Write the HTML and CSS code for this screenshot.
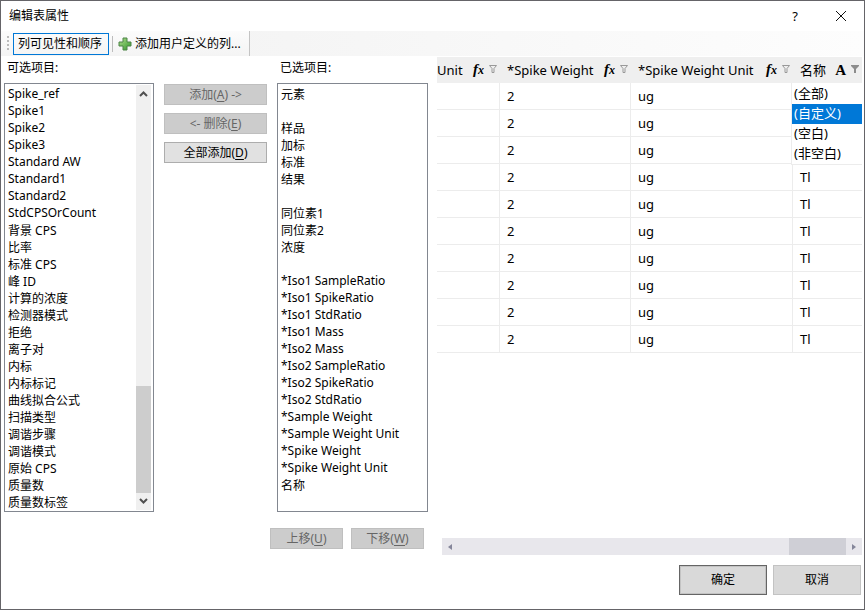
FILE: index.html
```html
<!DOCTYPE html>
<html lang="zh-CN">
<head>
<meta charset="utf-8">
<title>编辑表属性</title>
<link rel="stylesheet" href="styles.css">
</head>
<body>
<svg class="defs" aria-hidden="true">
  <symbol id="funnel" viewBox="0 0 8 8"><path d="M.5 .5h7L5 3.500v4H3v-4z" fill="none" stroke="#999"/></symbol>
  <symbol id="funnel-on" viewBox="0 0 8 8"><path d="M0 0h8v1L5 4V8H3V4L0 1z" fill="#8c8c8c"/></symbol>
</svg>
<div class="dialog">
  <header class="titlebar">
    <h1>编辑表属性</h1>
    <button class="caption help" aria-label="帮助">?</button>
    <button class="caption" aria-label="关闭"><svg width="12" height="12" viewBox="0 0 12 12"><path d="M1 1l10 10M11 1L1 11" stroke="#111" fill="none"/></svg></button>
  </header>
  <nav class="toolbar">
    <div class="strip">
      <span class="grip"></span>
      <button class="tool active">列可见性和顺序</button>
      <span class="separator"></span>
      <button class="tool"><svg width="14" height="14" viewBox="0 0 14 14"><defs><linearGradient id="g" x1="0" y1="0" x2="1" y2="1"><stop offset="0" stop-color="#b4e090"/><stop offset="1" stop-color="#2e9428"/></linearGradient></defs><path d="M5 1h4v4h4v4H9v4H5V9H1V5h4z" fill="url(#g)" stroke="#4d8446"/></svg>添加用户定义的列...</button>
    </div>
  </nav>
  <main class="content">
    <section class="picker">
      <div class="lists">
        <div class="list-block">
          <label for="available">可选项目:</label>
          <div class="listbox">
            <select id="available" multiple size="24">
              <option>Spike_ref</option><option>Spike1</option><option>Spike2</option><option>Spike3</option>
              <option>Standard AW</option><option>Standard1</option><option>Standard2</option><option>StdCPSOrCount</option>
              <option>背景 CPS</option><option>比率</option><option>标准 CPS</option><option>峰 ID</option>
              <option>计算的浓度</option><option>检测器模式</option><option>拒绝</option><option>离子对</option>
              <option>内标</option><option>内标标记</option><option>曲线拟合公式</option><option>扫描类型</option>
              <option>调谐步骤</option><option>调谐模式</option><option>原始 CPS</option><option>质量数</option><option>质量数标签</option>
            </select>
            <div class="vscroll" aria-hidden="true">
              <svg width="9" height="6" viewBox="0 0 9 6"><path d="M1 5l3.500-3.500L8 5" fill="none" stroke="#505050" stroke-width="2"/></svg>
              <span class="vthumb"></span>
              <svg width="9" height="6" viewBox="0 0 9 6"><path d="M1 1l3.500 3.500L8 1" fill="none" stroke="#505050" stroke-width="2"/></svg>
            </div>
          </div>
        </div>
        <div class="transfer">
          <button class="btn" disabled><span>添加(<u>A</u>) -&gt;</span></button>
          <button class="btn" disabled><span>&lt;- 删除(<u>E</u>)</span></button>
          <button class="btn"><span>全部添加(<u>D</u>)</span></button>
        </div>
        <div class="list-block chosen">
          <label for="selected">已选项目:</label>
          <div class="listbox">
            <select id="selected" multiple size="24">
              <option>元素</option><option></option><option>样品</option><option>加标</option><option>标准</option><option>结果</option><option></option>
              <option>同位素1</option><option>同位素2</option><option>浓度</option><option></option>
              <option>*Iso1 SampleRatio</option><option>*Iso1 SpikeRatio</option><option>*Iso1 StdRatio</option><option>*Iso1 Mass</option>
              <option>*Iso2 Mass</option><option>*Iso2 SampleRatio</option><option>*Iso2 SpikeRatio</option><option>*Iso2 StdRatio</option>
              <option>*Sample Weight</option><option>*Sample Weight Unit</option><option>*Spike Weight</option><option>*Spike Weight Unit</option><option>名称</option>
            </select>
          </div>
        </div>
      </div>
      <div class="order">
        <button class="btn" disabled><span>上移(<u>U</u>)</span></button>
        <button class="btn" disabled><span>下移(<u>W</u>)</span></button>
      </div>
    </section>
    <section class="preview">
      <table>
        <colgroup><col class="c-unit"><col class="c-weight"><col class="c-wunit"><col></colgroup>
        <thead><tr>
          <th><div class="head"><span>Unit</span><i class="fx">f<small>x</small></i><svg class="fun"><use href="#funnel"/></svg></div></th>
          <th><div class="head"><span>*Spike Weight</span><i class="fx">f<small>x</small></i><svg class="fun"><use href="#funnel"/></svg></div></th>
          <th><div class="head"><span>*Spike Weight Unit</span><i class="fx">f<small>x</small></i><svg class="fun"><use href="#funnel"/></svg></div></th>
          <th><div class="head"><span>名称</span><b class="type">A</b><svg class="fun"><use href="#funnel-on"/></svg></div>
            <ul class="menu" role="listbox"><li role="option">(全部)</li><li role="option" aria-selected="true">(自定义)</li><li role="option">(空白)</li><li role="option">(非空白)</li></ul></th>
        </tr></thead>
        <tbody>
          <tr><td></td><td>2</td><td>ug</td><td></td></tr>
          <tr><td></td><td>2</td><td>ug</td><td></td></tr>
          <tr><td></td><td>2</td><td>ug</td><td></td></tr>
          <tr><td></td><td>2</td><td>ug</td><td>Tl</td></tr>
          <tr><td></td><td>2</td><td>ug</td><td>Tl</td></tr>
          <tr><td></td><td>2</td><td>ug</td><td>Tl</td></tr>
          <tr><td></td><td>2</td><td>ug</td><td>Tl</td></tr>
          <tr><td></td><td>2</td><td>ug</td><td>Tl</td></tr>
          <tr><td></td><td>2</td><td>ug</td><td>Tl</td></tr>
          <tr><td></td><td>2</td><td>ug</td><td>Tl</td></tr>
        </tbody>
      </table>
      <div class="hscroll" aria-hidden="true">
        <svg width="4" height="6" viewBox="0 0 4 6"><path d="M4 0v6L0 3z" fill="#85869a"/></svg>
        <span class="hthumb"></span>
        <svg width="4" height="6" viewBox="0 0 4 6"><path d="M0 0v6l4-3z" fill="#85869a"/></svg>
      </div>
    </section>
  </main>
  <footer class="footer">
    <button class="btn large default">确定</button>
    <button class="btn large">取消</button>
  </footer>
</div>
</body>
</html>
```
FILE: styles.css
```css
* { box-sizing: border-box; }
body {
  margin: 0;
  color: #000;
  background: #fff;
  font: 12px/16px "Noto Sans", "Noto Sans CJK SC", sans-serif;
}
button, select { font: inherit; color: inherit; }
.defs { position: absolute; width: 0; height: 0; }

.dialog {
  display: flex;
  flex-direction: column;
  min-height: 100vh;
  border: 1px solid #656468;
}

.titlebar { display: flex; align-items: center; height: 30px; padding-left: 8px; }
.titlebar h1 { flex: 1; margin: 0; font-size: 12px; font-weight: 400; }
.caption {
  display: flex;
  align-items: center;
  justify-content: center;
  width: 46px;
  height: 28px;
  padding: 0;
  border: 0;
  background: none;
}
.help { font-size: 13px; }

.toolbar { display: flex; height: 25px; background: linear-gradient(90deg, #f1f1f1, #fdfdfd); }
.strip {
  display: flex;
  align-items: center;
  padding: 0 8px 0 6px;
  border-right: 1px solid #c4c4c4;
  background: linear-gradient(#fcfcfc, #f4f4f4);
}
.grip { width: 2px; height: 15px; margin-right: 4px; background: repeating-linear-gradient(#bbb 0 2px, transparent 2px 4px); }
.tool {
  display: flex;
  align-items: center;
  gap: 3px;
  height: 22px;
  padding: 0;
  border: 0;
  background: none;
  white-space: nowrap;
}
.active { padding: 0 6px 0 4px; border: 1px solid #0078d7; }
.separator { width: 1px; height: 16px; margin: 0 5px 0 3px; background: #bdbdbd; }

.content { display: flex; flex: 1; gap: 9px; }
.picker { padding: 0 0 6px 3px; }
.lists { display: flex; gap: 10px; }
.list-block { width: 150px; }
.chosen { width: 151px; }
.list-block label { display: block; height: 27px; padding: 4px 3px; }
.listbox { display: flex; height: 429px; border: 1px solid #828790; }
.listbox select {
  flex: 1;
  min-width: 0;
  height: 100%;
  margin: 0;
  padding: 1px;
  border: 0;
  outline: 0;
  border-radius: 0;
  background: #fff;
  overflow: hidden;
  scrollbar-width: none;
}
.listbox option { height: 17px; min-height: 17px; padding: 0 2px; line-height: 16px; }
.vscroll {
  display: flex;
  flex-direction: column;
  align-items: center;
  width: 15px;
  margin: 1px 2px 1px 0;
  padding: 6px 0;
  background: #f0f0f0;
}
.vthumb { width: 15px; height: 107px; margin: auto 0 5px; background: #cdcdcd; }

.transfer { display: flex; flex-direction: column; gap: 8px; width: 103px; padding-top: 28px; }
.btn {
  height: 21px;
  padding: 0;
  border: 1px solid #adadad;
  background: #e1e1e1;
  line-height: 18px;
}
.btn:disabled { border-color: #bfbfbf; background: #ccc; color: #666; }
.btn u { text-underline-offset: 2px; }
.order { display: flex; justify-content: flex-end; gap: 8px; padding: 16px 4px 0 0; }
.order .btn { width: 73px; }

.preview { display: flex; flex: 1; flex-direction: column; min-width: 0; padding-right: 2px; }
table {
  width: 100%;
  margin-top: 1px;
  border-collapse: separate;
  border-spacing: 0;
  table-layout: fixed;
  font-size: 13px;
}
.c-unit { width: 63px; }
.c-weight { width: 131px; }
.c-wunit { width: 162px; }
th, td { padding: 0 0 0 7px; text-align: left; font-weight: 400; }
th { position: relative; height: 26px; background: #efefef; }
th:first-child { padding-left: 0; }
td { height: 27px; border-right: 1px solid #ececec; border-bottom: 1px solid #ececec; }
td:last-child { border-right: 0; }
.head { display: flex; align-items: center; padding-right: 3px; white-space: nowrap; }
.fx, .type { margin-left: auto; margin-right: 5px; font: bold 15px/18px "Liberation Serif", serif; }
.fx { padding-bottom: 2px; font-style: italic; }
.fx small { font-size: 12px; }
.fun { width: 8px; height: 8px; margin-bottom: 3px; }

.menu {
  position: absolute;
  z-index: 1;
  top: 26px;
  left: -2px;
  right: 0;
  margin: 0;
  padding: 1px 0 0;
  list-style: none;
  background: #fff;
  border: solid #ececec;
  border-width: 0 0 1px 1px;
}
.menu li { height: 20px; padding-left: 2px; line-height: 19px; }
.menu [aria-selected] { background: #0078d7; color: #fff; }

.hscroll {
  display: flex;
  align-items: center;
  height: 17px;
  margin: auto 0 0 5px;
  padding: 0 6px;
  background: #e8e7ec;
}
.hthumb { width: 57px; height: 17px; margin: 0 6px 0 auto; background: #cfcfd6; }

.footer { display: flex; justify-content: flex-end; gap: 6px; padding: 10px 3px 14px; }
.large { width: 88px; height: 30px; border-color: #c3c3c3; background: #d9d9d9; }
.default { border-color: #656565; box-shadow: inset 0 0 0 1px #c3c3c3; }
```
